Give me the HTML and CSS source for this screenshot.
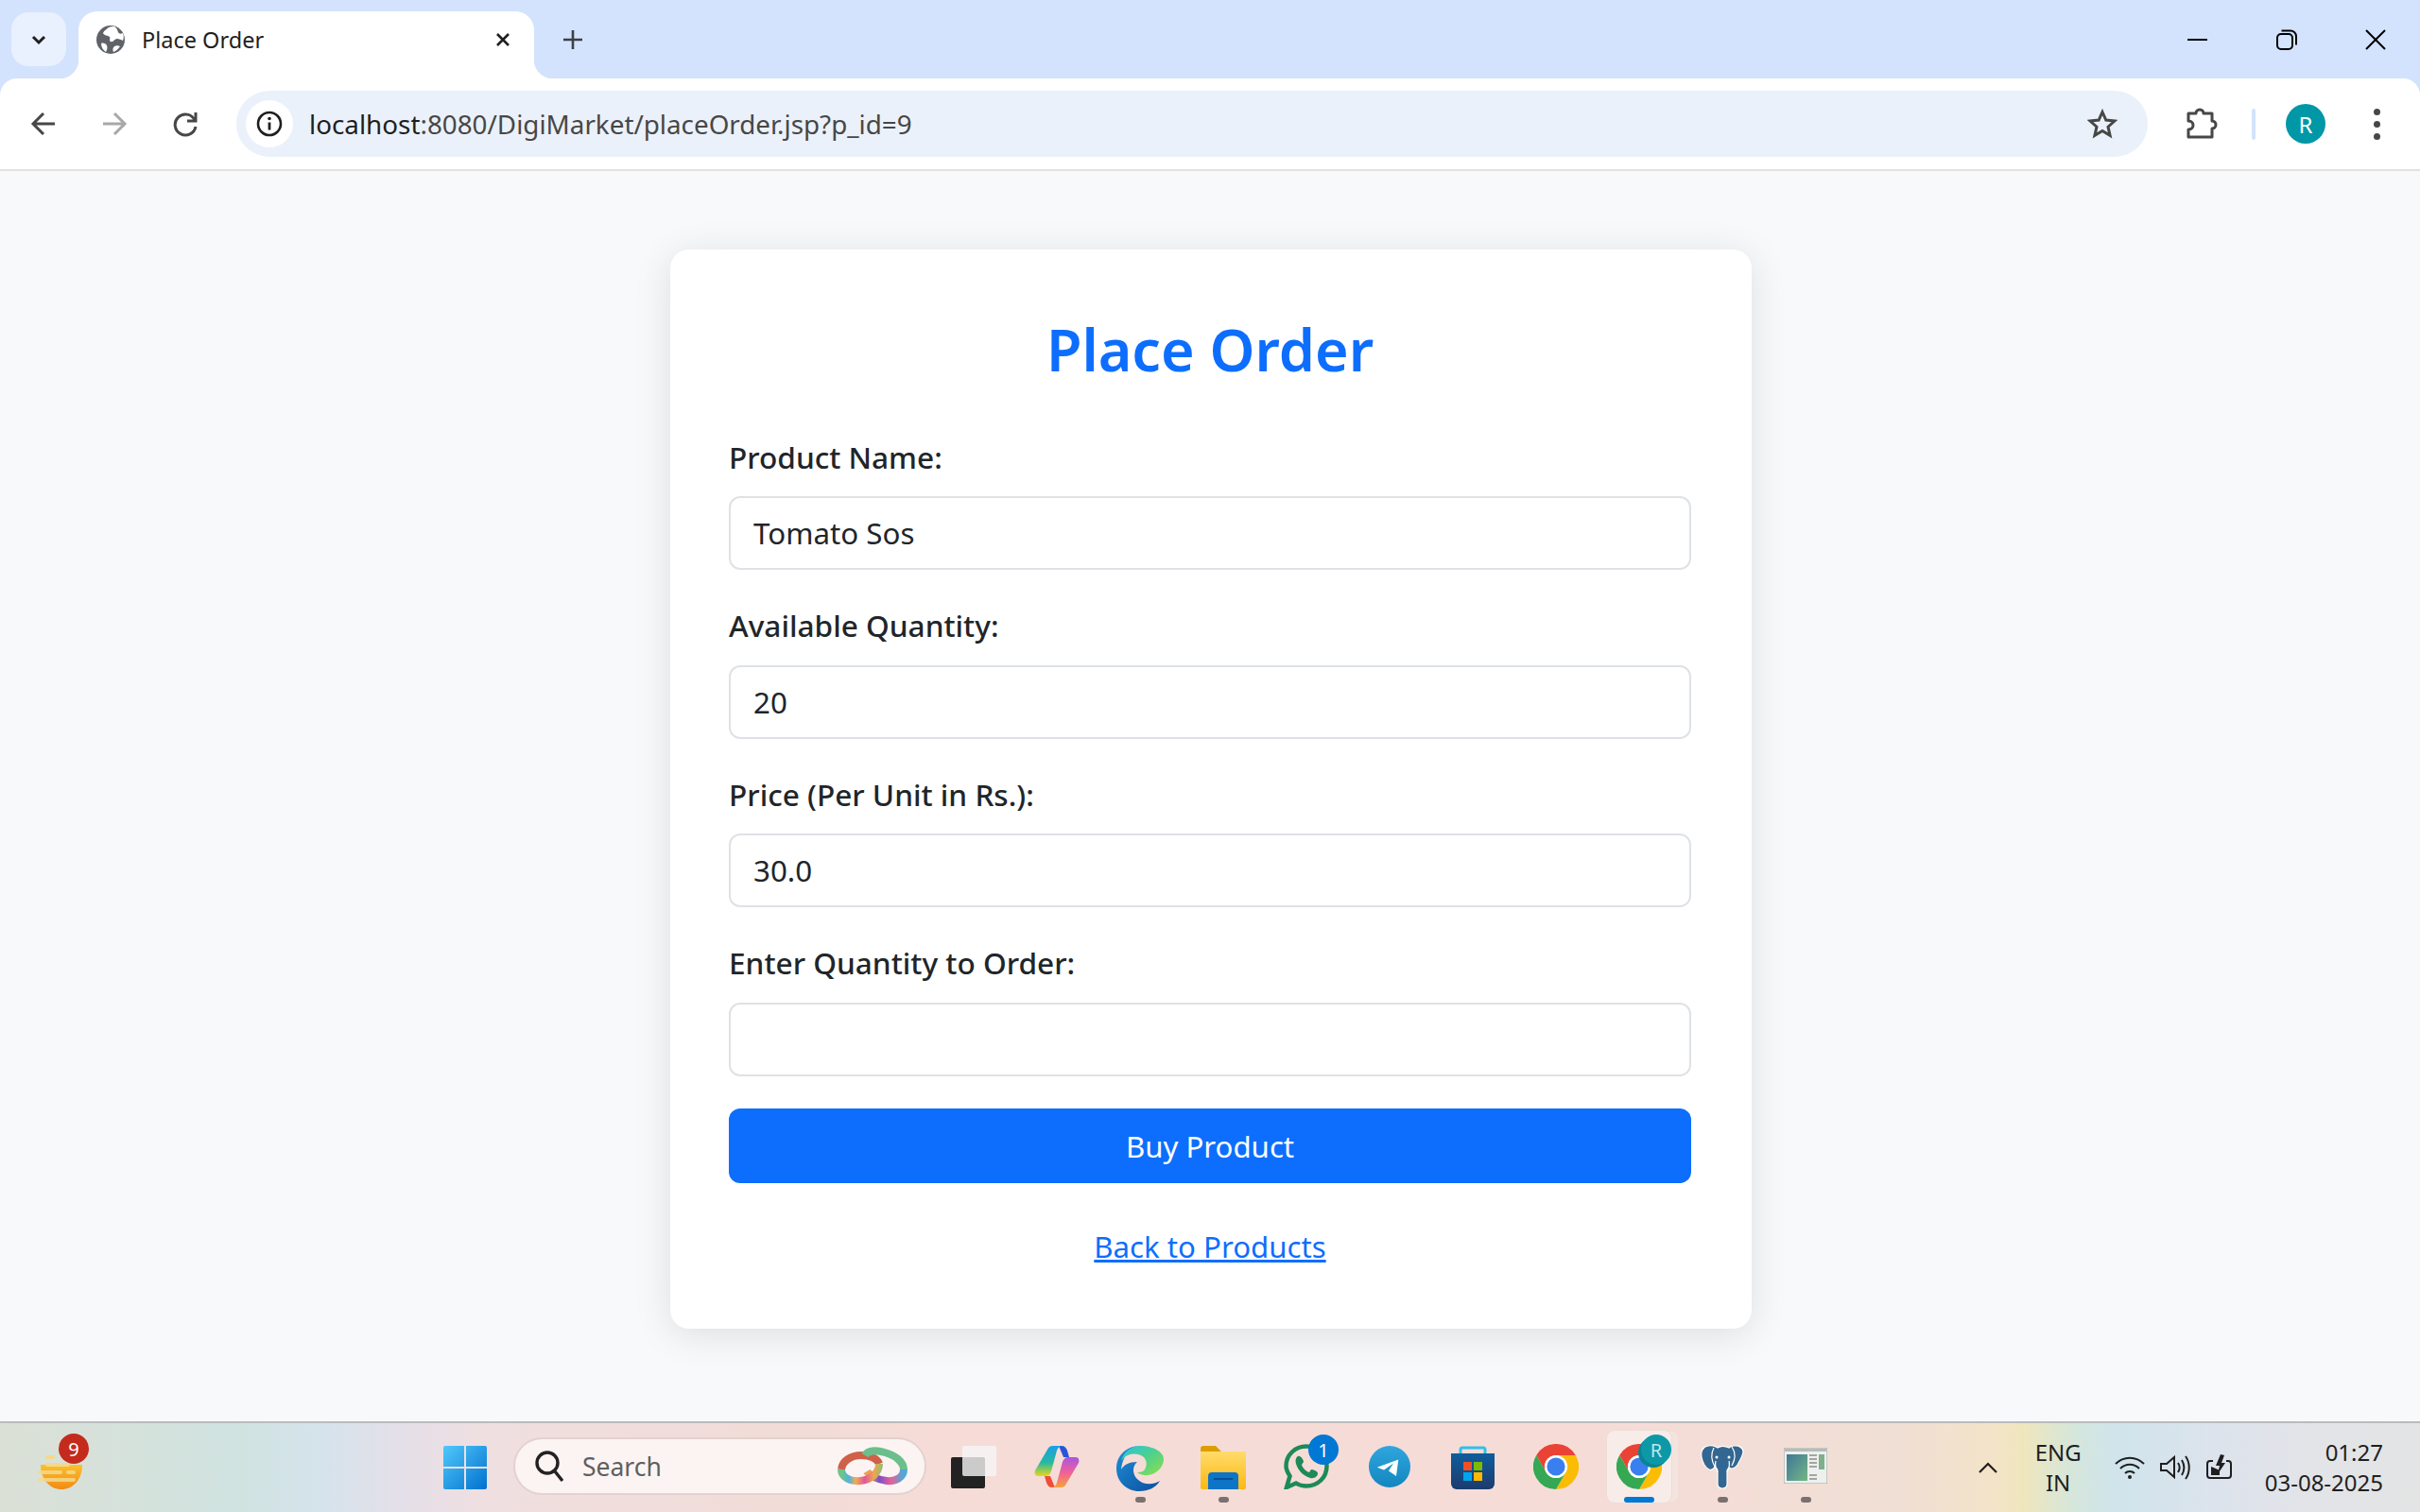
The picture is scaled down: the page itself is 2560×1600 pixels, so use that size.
FILE: index.html
```html
<!DOCTYPE html>
<html lang="en">

<head>
  <meta charset="UTF-8">
  <meta name="viewport" content="width=device-width, initial-scale=1.0">
  <title>Place Order</title>
  <link rel="stylesheet" href="styles.css">
</head>

<body>
  <svg class="defs" width="0" height="0">
    <defs>
      <symbol id="chrome" viewBox="0 0 48 48">
        <path fill="#ea4335" d="M24 12H44.8A24 24 0 0 0 3.2 12L13.6 30A12 12 0 0 1 24 12Z" />
        <path fill="#fbbc04" d="M34.4 30L24 48A24 24 0 0 0 44.8 12H24A12 12 0 0 1 34.4 30Z" />
        <path fill="#34a853" d="M13.6 30L3.2 12A24 24 0 0 0 24 48L34.4 30A12 12 0 0 1 13.6 30Z" />
        <circle cx="24" cy="24" r="12" fill="#fff" />
        <circle cx="24" cy="24" r="9.6" fill="#3a7ff0" />
      </symbol>
      <linearGradient id="win-g" x1="0" y1="0" x2="1" y2="1">
        <stop offset="0" stop-color="#52c8fb" />
        <stop offset="1" stop-color="#0071cf" />
      </linearGradient>
      <linearGradient id="edge-g" x1="0" y1="0" x2="1" y2="1">
        <stop offset="0" stop-color="#2bc3e0" />
        <stop offset=".5" stop-color="#4fd18b" />
        <stop offset="1" stop-color="#8ee04c" />
      </linearGradient>
      <linearGradient id="edge-b" x1="0" y1="0" x2="1" y2="1">
        <stop offset="0" stop-color="#1d8fd8" />
        <stop offset="1" stop-color="#0d4f9e" />
      </linearGradient>
      <linearGradient id="folder-g" x1="0" y1="0" x2="0" y2="1">
        <stop offset="0" stop-color="#ffdc6a" />
        <stop offset="1" stop-color="#fcb813" />
      </linearGradient>
      <linearGradient id="tg-g" x1="0" y1="0" x2="0" y2="1">
        <stop offset="0" stop-color="#2fa6dd" />
        <stop offset="1" stop-color="#1386c0" />
      </linearGradient>
      <linearGradient id="store-g" x1="0" y1="0" x2="0" y2="1">
        <stop offset="0" stop-color="#0f5d9c" />
        <stop offset="1" stop-color="#1d3b6e" />
      </linearGradient>
      <linearGradient id="cop-a" x1="0" y1="0" x2="0" y2="1">
        <stop offset="0" stop-color="#1b9fe8" />
        <stop offset=".55" stop-color="#25b9a0" />
        <stop offset="1" stop-color="#e6d81c" />
      </linearGradient>
      <linearGradient id="cop-b" x1="0" y1="0" x2="0" y2="1">
        <stop offset="0" stop-color="#f6a23c" />
        <stop offset=".5" stop-color="#f0609a" />
        <stop offset="1" stop-color="#a855e0" />
      </linearGradient>
      <linearGradient id="food-g" x1="0" y1="0" x2="0" y2="1">
        <stop offset="0" stop-color="#fbc02d" />
        <stop offset="1" stop-color="#f28a16" />
      </linearGradient>
      <linearGradient id="app-g" x1="0" y1="0" x2="1" y2="1">
        <stop offset="0" stop-color="#3e7796" />
        <stop offset="1" stop-color="#74b686" />
      </linearGradient>
      <linearGradient id="ring-a" gradientUnits="userSpaceOnUse" x1="0" y1="0" x2="48" y2="0">
        <stop offset=".1" stop-color="#6cc58a" />
        <stop offset=".25" stop-color="#4fb4dc" />
        <stop offset=".4" stop-color="#f4ab50" />
        <stop offset=".6" stop-color="#e0589a" />
        <stop offset=".8" stop-color="#f2a54e" />
        <stop offset="1" stop-color="#8cc070" />
      </linearGradient>
      <linearGradient id="ring-b" gradientUnits="userSpaceOnUse" x1="24" y1="0" x2="74" y2="0">
        <stop offset=".2" stop-color="#f0a050" />
        <stop offset=".4" stop-color="#7a4fc8" />
        <stop offset=".65" stop-color="#e8609a" />
        <stop offset=".9" stop-color="#4fa8d8" />
      </linearGradient>
    </defs>
  </svg>

  <header class="browser">
    <div class="tabstrip">
      <button class="tab-search">
        <svg width="20" height="20" viewBox="0 0 20 20"><path d="M4 7l6 6 6-6" fill="none" stroke="#1f1f1f" stroke-width="3" /></svg>
      </button>
      <div class="tab">
        <svg class="favicon" width="30" height="30" viewBox="0 0 30 30">
          <circle cx="15" cy="15" r="15" fill="#5f6368" />
          <path fill="#fff" d="M13 2c-2 2-5 3-6 6 1 3 5 2 7 4 1 2-1 4 1 5 3 1 4-3 7-3 2 0 4 1 6 2 1-2 1-6 0-8-2 1-4 1-5-1-1-3-2-5-4-6-2 0-4 0-6 1ZM5 19c2-1 5 0 6 2 1 3 0 5-1 7-3-2-5-5-5-9Zm14 3c2-1 4-1 6 0-2 3-4 5-7 6-1-2-1-4 1-6Z" />
        </svg>
        <span class="tab-title">Place Order</span>
        <svg class="tab-close" width="18" height="18" viewBox="0 0 18 18"><path d="M3 3l12 12M15 3L3 15" stroke="#1f1f1f" stroke-width="2.6" /></svg>
      </div>
      <svg class="new-tab" width="22" height="22" viewBox="0 0 22 22"><path d="M11 1v20M1 11h20" stroke="#3c4043" stroke-width="2.6" /></svg>
      <div class="window-controls">
        <svg width="22" height="22" viewBox="0 0 22 22"><path d="M0 11h21" stroke="#000" stroke-width="2" /></svg>
        <svg width="22" height="22" viewBox="0 0 22 22" fill="none" stroke="#000" stroke-width="2"><rect x="1" y="5" width="16" height="16" rx="4" /><path d="M5.5 1.5h9.5a6 6 0 0 1 6 6v9" /></svg>
        <svg width="22" height="22" viewBox="0 0 22 22"><path d="M1 1l20 20M21 1L1 21" stroke="#000" stroke-width="2" /></svg>
      </div>
    </div>

    <div class="toolbar">
      <svg class="nav-icon" width="28" height="28" viewBox="0 0 28 28" fill="none" stroke="#474747" stroke-width="3"><path d="M26 14H4M14 3L3 14l11 11" /></svg>
      <svg class="nav-icon" width="28" height="28" viewBox="0 0 28 28" fill="none" stroke="#a8a8a8" stroke-width="3"><path d="M2 14h22M14 3l11 11-11 11" /></svg>
      <svg class="nav-icon" width="28" height="28" viewBox="0 0 28 28" fill="none" stroke="#474747" stroke-width="3"><path d="M24 10a11 11 0 1 0 1 7" /><path d="M25 2v9h-9" /></svg>

      <div class="omnibox">
        <span class="info-chip">
          <svg width="28" height="28" viewBox="0 0 28 28"><circle cx="14" cy="14" r="12" fill="none" stroke="#1f1f1f" stroke-width="2.6" /><path d="M14 12.500v8" stroke="#1f1f1f" stroke-width="2.8" /><circle cx="14" cy="8.500" r="1.800" fill="#1f1f1f" /></svg>
        </span>
        <span class="url"><span class="url-host">localhost</span>:8080/DigiMarket/placeOrder.jsp?p_id=9</span>
        <svg class="star" width="32" height="32" viewBox="0 0 32 32"><path d="M16 3.500l3.800 8.600 9.200.9-7 6.200 2.100 9.200L16 23.500l-8.100 4.900L10 19.200l-7-6.200 9.200-.9Z" fill="none" stroke="#474747" stroke-width="3" /></svg>
      </div>

      <svg class="ext-icon" width="34" height="34" viewBox="0 0 34 34"><path d="M3 6h8a4 4 0 0 1 8 0h9v8a4 4 0 0 1 0 8v9H3v-8c4 0 5-3 5-4.500S7 14 3 14Z" fill="none" stroke="#474747" stroke-width="3" stroke-linejoin="round" /></svg>
      <span class="toolbar-divider"></span>
      <span class="avatar">R</span>
      <span class="menu-dots"><i></i><i></i><i></i></span>
    </div>
  </header>

  <main class="page">
    <section class="card">
      <h2 class="card-title">Place Order</h2>
      <form class="order-form">
        <label class="field">
          <span class="field-label">Product Name:</span>
          <input class="field-input" type="text" value="Tomato Sos">
        </label>
        <label class="field">
          <span class="field-label">Available Quantity:</span>
          <input class="field-input" type="text" value="20">
        </label>
        <label class="field">
          <span class="field-label">Price (Per Unit in Rs.):</span>
          <input class="field-input" type="text" value="30.0">
        </label>
        <label class="field">
          <span class="field-label">Enter Quantity to Order:</span>
          <input class="field-input" type="text">
        </label>
        <button class="buy-button" type="button">Buy Product</button>
      </form>
      <a class="back-link" href="#">Back to Products</a>
    </section>
  </main>

  <footer class="taskbar">
    <div class="widget">
      <svg width="48" height="40" viewBox="0 0 48 40">
        <path fill="url(#food-g)" d="M3 10H47C47 26 37 36 25 36 13 36 3 26 3 10Z" />
        <g fill="#f3d98c">
          <rect x="8" y="0" width="10" height="4" rx="2" />
          <rect x="8" y="8" width="26" height="4" rx="2" />
          <rect x="0" y="16" width="26" height="4" rx="2" opacity=".85" />
          <rect x="30" y="16" width="10" height="4" rx="2" opacity=".85" />
          <rect x="0" y="24" width="40" height="4" rx="2" opacity=".85" />
        </g>
      </svg>
      <span class="badge badge-red">9</span>
    </div>

    <svg class="start" width="46" height="46" viewBox="0 0 46 46">
      <path fill="url(#win-g)" d="M2 0h20v22H0V2a2 2 0 0 1 2-2ZM24 0h20a2 2 0 0 1 2 2v20H24ZM0 24h22v22H2a2 2 0 0 1-2-2ZM24 24h22v20a2 2 0 0 1-2 2H24Z" />
    </svg>

    <div class="search-box">
      <svg width="34" height="36" viewBox="0 0 34 36" fill="none" stroke="#222" stroke-width="3.400"><circle cx="14" cy="14" r="11" /><path d="M22 23l8 10" /></svg>
      <span class="search-text">Search</span>
      <svg class="rings" width="76" height="42" viewBox="0 0 76 42" fill="none" stroke-width="8">
        <path stroke="#cf6148" d="M4 24C5 15 14 9 25 9c9 0 17 3 19 9" />
        <path stroke="#6cbf8c" d="M29 9C32 4 40 3 50 6c11 3 20 10 20 18" />
        <path stroke="url(#ring-b)" d="M70 24c0 8-8 13-18 12-9-1-18-5-21-10" />
        <path stroke="url(#ring-a)" d="M4 24c0 8 9 13 20 12 11-1 20-8 20-18" />
      </svg>
    </div>

    <div class="task-items">
      <div class="task-item">
        <svg class="task-icon" width="48" height="46" viewBox="0 0 48 46">
          <rect x="0" y="12" width="36" height="33" rx="2" fill="#222" />
          <rect x="12" y="0" width="36" height="32" rx="2" fill="#f6f6f6" opacity=".8" />
        </svg>
      </div>
      <div class="task-item">
        <svg class="task-icon" width="48" height="44" viewBox="0 0 48 44">
          <path fill="#2a55d8" d="M26 0h3c3 0 5 2 6 5l2 7H31Z" />
          <path fill="url(#cop-a)" d="M14 4C15 1.500 17 0 20 0H30C27 0 25 2 24 5L18 27C17 30 15 32 12 32H4C1 32 0 29 1 26Z" />
          <g transform="rotate(180 24 22)">
            <path fill="#f04e36" d="M26 0h3c3 0 5 2 6 5l2 7H31Z" />
            <path fill="url(#cop-b)" d="M14 4C15 1.500 17 0 20 0H30C27 0 25 2 24 5L18 27C17 30 15 32 12 32H4C1 32 0 29 1 26Z" />
          </g>
        </svg>
      </div>
      <div class="task-item">
        <svg class="task-icon" width="50" height="48" viewBox="0 0 50 48">
          <path fill="url(#edge-b)" d="M25 0C11 0 0 10 0 24c0 14 11 24 24 24 10 0 18-4 22-11-8 5-18 4-23-1-6-5-7-14-1-19-9 0-14 3-17 8C7 10 15 0 25 0Z" />
          <path fill="url(#edge-g)" d="M25 0C15 0 7 7 5 16c4-6 11-9 18-7 8 2 11 9 7 16-2 3-6 3-8 3 5 4 12 4 18 1 6-3 10-9 10-15C50 6 38 0 25 0Z" />
        </svg>
        <span class="task-dot"></span>
      </div>
      <div class="task-item">
        <svg class="task-icon" width="48" height="46" viewBox="0 0 48 46">
          <path fill="#dd9f00" d="M0 3a3 3 0 0 1 3-3h13l6 6h26v12H0Z" />
          <path fill="url(#folder-g)" d="M0 6h48v38a2 2 0 0 1-2 2H2a2 2 0 0 1-2-2Z" />
          <path fill="#0d74c8" d="M8 46V32a4 4 0 0 1 4-4h24a4 4 0 0 1 4 4v14Z" />
          <rect x="14" y="34" width="20" height="2" fill="#0a4f92" />
        </svg>
        <span class="task-dot"></span>
      </div>
      <div class="task-item task-item-raised">
        <svg class="task-icon" width="48" height="48" viewBox="0 0 48 48">
          <path fill="none" stroke="#1d8a58" stroke-width="4.500" d="M3 46l3.500-12C4 30 2.500 26 2.500 23.500 2.500 11.500 12 2.500 24 2.500s21.500 9 21.500 21-9.500 21-21.500 21c-4 0-8-1-11-3Z" />
          <path fill="#1d8a58" d="M15 13c-2 1-3 4-2 8 2 7 8 13 15 15 5 1 8-2 8-5 0-2-5-4-7-4l-2 3c-4-1-7-5-8-8l2-3c0-2-3-7-6-6Z" />
        </svg>
        <span class="badge badge-blue">1</span>
      </div>
      <div class="task-item">
        <svg class="task-icon" width="44" height="44" viewBox="0 0 44 44">
          <circle cx="22" cy="22" r="22" fill="url(#tg-g)" />
          <path fill="#fff" d="M8.700 22.700L31.300 14.500 29 32 21 26.500 26 18.500 16 25.500Z" />
        </svg>
      </div>
      <div class="task-item">
        <svg class="task-icon" width="46" height="46" viewBox="0 0 46 46">
          <path fill="none" stroke="#2fc0ec" stroke-width="3" d="M10 10V4a2 2 0 0 1 2-2h22a2 2 0 0 1 2 2v6" />
          <path fill="url(#store-g)" d="M0 8h46v32a6 6 0 0 1-6 6H6a6 6 0 0 1-6-6Z" />
          <rect x="13" y="17" width="9" height="9" fill="#f25022" />
          <rect x="24" y="17" width="9" height="9" fill="#7fba00" />
          <rect x="13" y="28" width="9" height="9" fill="#00a4ef" />
          <rect x="24" y="28" width="9" height="9" fill="#ffb900" />
        </svg>
      </div>
      <div class="task-item task-item-raised">
        <svg class="task-icon" width="48" height="48"><use href="#chrome" /></svg>
      </div>
      <div class="task-item task-item-raised task-item-active">
        <svg class="task-icon" width="48" height="48"><use href="#chrome" /></svg>
        <span class="badge badge-teal">R</span>
        <span class="task-indicator"></span>
      </div>
      <div class="task-item task-item-raised">
        <svg class="task-icon" width="46" height="48" viewBox="0 0 46 48">
          <path fill="#336791" stroke="#fff" stroke-width="1.200" d="M8 2C2 3 0 8 1 14c1 5 4 11 8 13 3 1 5-1 6-3l2 2c1 1 1 2 1 3v13c0 3 2 5 5 5s5-2 5-5V29c0-2 1-3 2-4 3 2 6 1 9-3 3-5 6-10 6-14 0-4-5-7-10-6-2 0-4 1-5 2-4-2-9-2-12 0-3-2-6-3-10-2Z" />
          <path fill="none" stroke="#fff" stroke-width="1.200" d="M14 4c-3 6-3 13 1 20M33 3c4 6 4 13 0 20M18 30c-2-4-3-8-2-12M28 30c2-4 3-8 2-12" />
          <circle cx="17" cy="14" r="1.500" fill="#fff" />
          <circle cx="30" cy="14" r="1.500" fill="#fff" />
        </svg>
        <span class="task-dot"></span>
      </div>
      <div class="task-item task-item-low">
        <svg class="task-icon" width="46" height="38" viewBox="0 0 46 38">
          <rect width="46" height="38" fill="#eef0ee" stroke="#9aa09c" />
          <rect x="1" y="1" width="44" height="3" fill="#b8bcb8" />
          <rect x="3" y="7" width="22" height="28" fill="url(#app-g)" />
          <g fill="#a0a8a0">
            <rect x="27" y="7" width="8" height="2" />
            <rect x="27" y="11" width="8" height="2" />
            <rect x="27" y="15" width="8" height="2" />
            <rect x="27" y="19" width="8" height="2" />
            <rect x="27" y="28" width="8" height="2" />
            <rect x="27" y="32" width="8" height="2" />
          </g>
          <rect x="37" y="7" width="6" height="16" fill="#7fb08c" />
        </svg>
        <span class="task-dot"></span>
      </div>
    </div>

    <div class="tray">
      <svg class="tray-chevron" width="20" height="12" viewBox="0 0 20 12"><path d="M1 11l9-9 9 9" fill="none" stroke="#1f1f1f" stroke-width="2.200" /></svg>
      <div class="tray-lang"><span>ENG</span><span>IN</span></div>
      <div class="tray-icons">
        <svg width="32" height="26" viewBox="0 0 32 26" fill="none" stroke="#1f1f1f" stroke-width="2"><path d="M1 9a21 21 0 0 1 30 0M6 14a14 14 0 0 1 20 0M11 19a7 7 0 0 1 10 0" /><circle cx="16" cy="23" r="2" fill="#1f1f1f" stroke="none" /></svg>
        <svg width="32" height="28" viewBox="0 0 32 28" fill="none" stroke="#1f1f1f" stroke-width="2"><path d="M1 10h6l8-7v21l-8-7H1ZM19 9c2 3 2 7 0 10M23 6c3 5 3 11 0 16M27 2c5 7 5 17 0 24" /></svg>
        <svg width="30" height="28" viewBox="0 0 30 28"><path d="M8 7H5a3 3 0 0 0-3 3v12a3 3 0 0 0 3 3h19a3 3 0 0 0 3-3V10a3 3 0 0 0-3-3h-2" fill="none" stroke="#1f1f1f" stroke-width="2" /><path d="M6 13l5 2 4 2v5H6Z" fill="#1f1f1f" /><path d="M16 0l-5 12h4l-2 9 8-12h-4l3-8Z" fill="#1f1f1f" /></svg>
      </div>
      <div class="tray-clock"><span>01:27</span><span>03-08-2025</span></div>
    </div>
  </footer>
</body>

</html>
```

FILE: styles.css
```css
*,
*::before,
*::after {
  box-sizing: border-box;
}

html,
body {
  height: 100%;
}

body {
  margin: 0;
  height: 1600px;
  display: flex;
  flex-direction: column;
  overflow: hidden;
  font-family: "Noto Sans", "Open Sans", sans-serif;
  color: #212529;
  background: #f8f9fa;
}

.defs {
  position: absolute;
}

/* browser chrome */
.browser {
  background: #d3e3fd;
  flex: none;
}

.tabstrip {
  height: 83px;
  display: flex;
  align-items: flex-start;
}

.tab-search {
  width: 58px;
  height: 57px;
  margin: 13px 0 0 12px;
  padding: 0;
  border: 0;
  border-radius: 18px;
  background: #e9f0fe;
  display: flex;
  align-items: center;
  justify-content: center;
}

.tab {
  position: relative;
  width: 482px;
  height: 71px;
  margin: 12px 0 0 13px;
  padding: 0 24px 12px 19px;
  background: #fff;
  border-radius: 20px 20px 0 0;
  display: flex;
  align-items: center;
  gap: 18px;
}

.tab::before,
.tab::after {
  content: '';
  position: absolute;
  bottom: 0;
  width: 20px;
  height: 20px;
}

.tab::before {
  left: -20px;
  background: radial-gradient(circle at 0 0, transparent 20px, #fff 20.500px);
}

.tab::after {
  right: -20px;
  background: radial-gradient(circle at 100% 0, transparent 20px, #fff 20.500px);
}

.tab-title {
  font-size: 23.500px;
  color: #1f1f1f;
  flex: 1;
}

.new-tab {
  margin: 31px 0 0 30px;
}

.window-controls {
  margin: 31px 36px 0 auto;
  display: flex;
  gap: 72px;
}

.toolbar {
  height: 98px;
  padding: 0 32px;
  background: #fff;
  border-bottom: 2px solid #e2e2e2;
  border-radius: 18px 18px 0 0;
  display: flex;
  align-items: center;
}

.nav-icon {
  margin-right: 47px;
}

.omnibox {
  width: 2022px;
  height: 70px;
  margin-left: -7px;
  padding: 0 32px 0 10px;
  background: #ebf1fa;
  border-radius: 35px;
  display: flex;
  align-items: center;
}

.info-chip {
  width: 50px;
  height: 50px;
  background: #fff;
  border-radius: 50%;
  display: flex;
  align-items: center;
  justify-content: center;
  flex: none;
}

.url {
  margin-left: 17px;
  font-size: 27.800px;
  color: #474747;
  flex: 1;
}

.url-host {
  color: #1f1f1f;
}

.ext-icon {
  margin-left: 40px;
}

.toolbar-divider {
  width: 4px;
  height: 33px;
  margin-left: 36px;
  background: #d3e3fd;
  border-radius: 2px;
}

.avatar {
  width: 42px;
  height: 42px;
  margin-left: 32px;
  border-radius: 50%;
  background: #0097a7;
  color: #fff;
  font-size: 24px;
  display: flex;
  align-items: center;
  justify-content: center;
}

.menu-dots {
  margin-left: 51px;
  display: flex;
  flex-direction: column;
  gap: 6px;

  i {
    width: 7px;
    height: 7px;
    border-radius: 50%;
    background: #474747;
  }
}

/* page */
.page {
  flex: 1;
  padding: 83px 0 0 2px;
  background: #f8f9fa;
}

.card {
  width: 1144px;
  margin: 0 auto;
  padding: 62px 64px 62px 62px;
  background: #fff;
  border-radius: 20px;
  box-shadow: 0 6px 40px rgba(0, 0, 0, .11);
}

.card-title {
  margin: 5px 0 49.500px;
  font-size: 61px;
  font-weight: 600;
  line-height: 78px;
  text-align: center;
  color: #0d6efd;
}

.order-form {
  display: flex;
  flex-direction: column;
}

.field {
  display: block;
  margin-bottom: 34px;
}

.field-label {
  display: block;
  margin-bottom: 17.670px;
  font-size: 31.600px;
  line-height: 49px;
  font-weight: 500;
}

.field-input {
  display: block;
  width: 100%;
  height: 78px;
  padding: 0 24px;
  border: 2px solid #dee2e6;
  border-radius: 12px;
  background: #fff;
  color: #212529;
  font: inherit;
  font-size: 31.300px;
}

.buy-button {
  height: 79px;
  border: 0;
  border-radius: 12px;
  background: #0d6efd;
  color: #fff;
  font: inherit;
  font-size: 31.200px;
}

.back-link {
  display: block;
  margin-top: 43px;
  font-size: 31.200px;
  line-height: 49px;
  text-align: center;
  color: #0d6efd;
}

/* taskbar */
.taskbar {
  flex: none;
  height: 96px;
  border-top: 2px solid #b9bcbc;
  display: flex;
  background: linear-gradient(90deg, #dbe0d6 0, #d0e3e0 250px, #d5e3ec 340px, #e5dfe8 430px, #f0dfe0 520px, #f1dcd8 800px, #f6dcd7 1000px, #f6dcd7 1700px, #f0dfd5 2000px, #f3e3c8 2110px, #efe6bd 2140px, #d5e6dc 2195px, #d0e4ec 2240px, #dde3ec 2350px, #e3e4e8 2450px, #e3e4e4 2560px);
}

.widget {
  position: relative;
  width: 122px;
  padding: 34px 0 0 40px;
}

.start {
  margin: 24px 0 0 347px;
}

.search-box {
  width: 437px;
  height: 61px;
  margin: 15px 6px 0 28px;
  padding: 0 16px 0 20px;
  background: #fbf4f3;
  border: 2px solid #e3d2d0;
  border-radius: 31px;
  display: flex;
  align-items: center;
}

.search-text {
  margin-left: 17px;
  font-size: 26.500px;
  color: #5f5f5f;
  flex: 1;
}

.task-items {
  display: flex;
}

.task-item {
  position: relative;
  width: 88px;
  height: 94px;
  padding-top: 24px;
  display: flex;
  flex-direction: column;
  align-items: center;
}

.task-item-raised {
  padding-top: 22px;
}

.task-item-low {
  padding-top: 26px;
}

.task-item-active::before {
  content: '';
  position: absolute;
  top: 8px;
  bottom: 10px;
  left: 10px;
  right: 10px;
  background: #f8ece8;
  border-radius: 8px;
  box-shadow: 0 0 0 1px #eedcd8, 8px 0 0 -1px #f3e4e0;
}

.task-icon {
  position: relative;
}

.task-dot {
  position: absolute;
  bottom: 10px;
  width: 11px;
  height: 6px;
  border-radius: 3px;
  background: #7a7070;
}

.task-indicator {
  position: absolute;
  bottom: 10px;
  width: 32px;
  height: 6px;
  border-radius: 3px;
  background: #0078d4;
}

.badge {
  position: absolute;
  width: 32px;
  height: 32px;
  border-radius: 50%;
  color: #fff;
  font-size: 20px;
  display: flex;
  align-items: center;
  justify-content: center;
}

.badge-red {
  top: 11px;
  left: 62px;
  background: #c42b1c;
}

.badge-blue {
  top: 12px;
  left: 46px;
  background: #0078d4;
}

.badge-teal {
  top: 12px;
  left: 46px;
  background: #0d98a8;
  color: #bfe6ea;
  box-shadow: -3px 3px 0 #0a8494;
}

.tray {
  margin-left: auto;
  padding-right: 39px;
  display: flex;
  align-items: center;
}

.tray-chevron {
  margin-right: 40px;
}

.tray-lang,
.tray-clock {
  display: flex;
  flex-direction: column;
  font-size: 24px;
  line-height: 32px;
  color: #1f1f1f;
}

.tray-lang {
  align-items: center;
  margin-right: 35px;
}

.tray-clock {
  align-items: flex-end;
  margin-left: 33px;
}

.tray-icons {
  display: flex;
  align-items: center;
  gap: 16px;
}
```
